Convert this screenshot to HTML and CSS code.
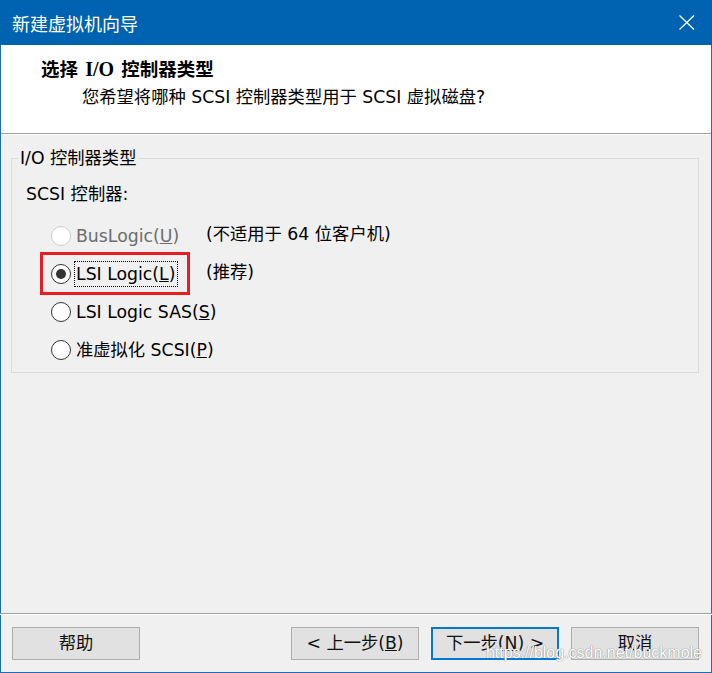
FILE: index.html
```html
<!DOCTYPE html>
<html lang="zh-CN">
<head>
<meta charset="utf-8">
<title>新建虚拟机向导</title>
<link rel="stylesheet" href="styles.css">
</head>
<body>
<div class="window">
  <div class="titlebar">
    <span class="title">新建虚拟机向导</span>
    <svg class="close" width="16" height="15" viewBox="0 0 16 15" aria-hidden="true">
      <path d="M0.5 0.5 L15 14.5 M15 0.5 L0.5 14.5" stroke="#fff" stroke-width="1.2" fill="none"/>
    </svg>
  </div>
  <div class="header">
    <div class="h-title">选择 <span class="latin">I/O</span> 控制器类型</div>
    <div class="h-sub">您希望将哪种 SCSI 控制器类型用于 SCSI 虚拟磁盘?</div>
  </div>
  <div class="main">
    <fieldset class="group">
      <legend>I/O 控制器类型</legend>
      <div class="sublabel">SCSI 控制器:</div>
      <div class="options">
        <div class="option disabled"><span class="radio"></span><span class="label">BusLogic(<u>U</u>)</span></div>
        <div class="note">(不适用于 64 位客户机)</div>
        <div class="option marked"><span class="radio checked"></span><span class="label focus">LSI Logic(<u>L</u>)</span></div>
        <div class="note">(推荐)</div>
        <div class="option"><span class="radio"></span><span class="label">LSI Logic SAS(<u>S</u>)</span></div>
        <div class="note"></div>
        <div class="option"><span class="radio"></span><span class="label">准虚拟化 SCSI(<u>P</u>)</span></div>
        <div class="note"></div>
      </div>
    </fieldset>
  </div>
  <div class="footer">
    <button class="btn">帮助</button>
    <div class="btn-group">
      <button class="btn">&lt; 上一步(<u>B</u>)</button>
      <button class="btn primary">下一步(<u>N</u>) &gt;</button>
      <button class="btn">取消</button>
    </div>
  </div>
  <div class="watermark">https://blog.csdn.net/buckmole</div>
</div>
</body>
</html>
```
FILE: styles.css
```css
* { box-sizing: border-box; }
html, body { margin: 0; padding: 0; }
body {
  font-family: "DejaVu Sans", "Noto Sans CJK SC", sans-serif;
  font-size: 17.3px;
  color: #000;
  background: #f0f0f0;
}
.window {
  position: relative;
  width: 712px;
  height: 673px;
  border: 1px solid #1b6fba;
  border-top: 0;
  background: #f0f0f0;
  display: flex;
  flex-direction: column;
}
.titlebar {
  height: 45px;
  margin: 0 -1px;
  background: #0063b1;
  display: flex;
  align-items: center;
  justify-content: space-between;
  padding: 0 17px 0 12px;
}
.title {
  color: #fff;
  font-family: "Noto Sans CJK SC", sans-serif;
  font-size: 18px;
  line-height: 22px;
}
.close { display: block; margin-top: -1px; }
.header {
  height: 89px;
  background: #fff;
  border-bottom: 1px solid #a0a0a0;
  padding: 12px 0 0 40px;
}
.h-title {
  font-family: "Noto Sans CJK SC", sans-serif;
  font-weight: bold;
  font-size: 18.5px;
  line-height: 22px;
  word-spacing: 3px;
}
.h-title .latin { font-family: "Liberation Serif", serif; font-size: 20px; }
.h-sub {
  margin: 6px 0 0 41px;
  line-height: 22px;
}
.main {
  flex: 1;
  padding: 13px 12px 0 10px;
  box-shadow: inset 0 1px #fff;
}
.group {
  margin: 0;
  padding: 0 0 3px 0;
  border: 1px solid #dcdcdc;
  min-width: 0;
}
.group legend {
  margin-left: 6px;
  padding: 0 2px;
  line-height: 22px;
}
.sublabel {
  margin: 14px 0 0 14px;
  line-height: 22px;
}
.options {
  margin: 12px 0 0 39px;
  display: grid;
  grid-template-columns: 155px auto;
  grid-auto-rows: 38px;
  align-items: center;
  white-space: nowrap;
}
.option {
  display: flex;
  align-items: center;
  gap: 4px;
  justify-self: start;
}
.option.disabled { color: #6d6d6d; }
.radio {
  width: 20px;
  height: 20px;
  border-radius: 50%;
  border: 1px solid #333;
  background: #fff;
  display: flex;
  align-items: center;
  justify-content: center;
  flex: none;
}
.disabled .radio { border-color: #cccccc; }
.radio.checked::after {
  content: "";
  width: 10px;
  height: 10px;
  border-radius: 50%;
  background: #333;
}
.label { line-height: 22px; padding: 1px 1px; }
.label.focus { outline: 1px dotted #000; outline-offset: 0; }
.option.marked { position: relative; }
.option.marked::after {
  content: "";
  position: absolute;
  left: -11px;
  right: -13px;
  top: -10px;
  bottom: -9px;
  border: 3px solid #e81e25;
}
.note { line-height: 22px; margin-top: -4px; }
.footer {
  height: 59px;
  border-top: 1px solid #a0a0a0;
  box-shadow: inset 0 1px #fff;
  margin: 0 -1px;
  padding: 13px 13px 12px 12px;
  display: flex;
  justify-content: space-between;
  align-items: flex-start;
}
.btn-group { display: flex; gap: 12px; }
.btn {
  width: 128px;
  height: 33px;
  margin: 0;
  background: #e1e1e1;
  border: 1px solid #adadad;
  font-family: "DejaVu Sans", "Noto Sans CJK SC", sans-serif;
  font-size: 17.3px;
  color: #111;
  padding: 0;
  line-height: 1;
  white-space: nowrap;
}
.btn.primary { border: 2px solid #0078d7; }
.watermark {
  position: absolute;
  right: 9px;
  bottom: 10px;
  font-family: "Liberation Sans", sans-serif;
  font-size: 16px;
  color: #ffffff;
  text-shadow: 0 0 1px #8a8a8a, 0 0 1px #8a8a8a;
  pointer-events: none;
}
```
